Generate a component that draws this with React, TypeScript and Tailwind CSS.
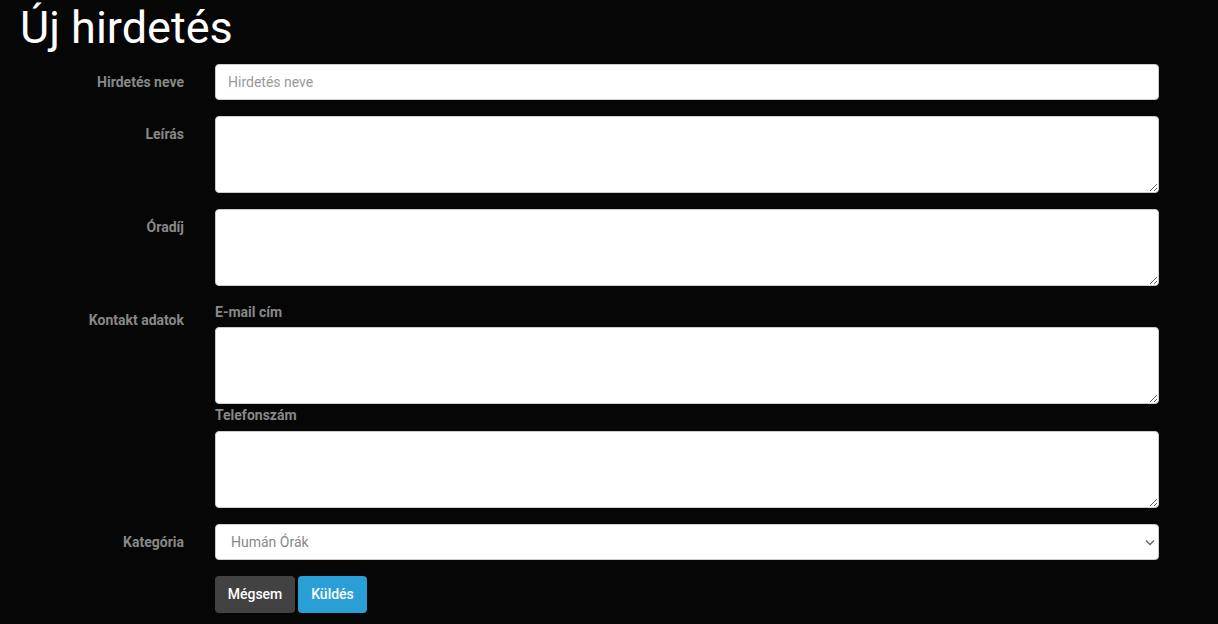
import React from "react";

const labelCls =
  "w-[184px] shrink-0 text-right text-[14px] font-bold text-[#888] pt-[8px] leading-[20px]";
const inputCls =
  "w-[944px] bg-white border border-[#ccc] rounded-[4px] text-[14px] text-[#555] outline-none";

export default function App() {
  return (
    <div
      className="min-h-[624px] bg-[#060606] text-[#888]"
      style={{ fontFamily: "Roboto, 'Noto Sans', sans-serif" }}
    >
      <h1 className="pl-[20px] pt-[3px] text-[45px] leading-[50px] font-normal text-white">
        Új hirdetés
      </h1>
      <form className="mt-[11px] flex flex-col gap-[16px]">
        <div className="flex">
          <label className={labelCls}>Hirdetés neve</label>
          <div className="ml-[31px]">
            <input
              className={`${inputCls} h-[36px] px-[12px] placeholder:text-[#999]`}
              placeholder="Hirdetés neve"
            />
          </div>
        </div>
        <div className="flex">
          <label className={labelCls}>Leírás</label>
          <div className="ml-[31px] flex">
            <textarea className={`${inputCls} h-[77px] px-[12px] py-[6px]`} />
          </div>
        </div>
        <div className="flex">
          <label className={labelCls}>Óradíj</label>
          <div className="ml-[31px] flex">
            <textarea className={`${inputCls} h-[77px] px-[12px] py-[6px]`} />
          </div>
        </div>
        <div className="flex">
          <label className={`${labelCls} pt-[7px]`}>Kontakt adatok</label>
          <div className="ml-[31px] flex flex-col">
            <span className="text-[14px] font-bold leading-[20px] text-[#888] mb-[5px]">
              E-mail cím
            </span>
            <textarea className={`${inputCls} h-[77px] px-[12px] py-[6px]`} />
            <span className="text-[14px] font-bold leading-[20px] text-[#888] mt-[1px] mb-[6px]">
              Telefonszám
            </span>
            <textarea className={`${inputCls} h-[77px] px-[12px] py-[6px]`} />
          </div>
        </div>
        <div className="flex">
          <label className={labelCls}>Kategória</label>
          <div className="ml-[31px] relative">
            <select
              className={`${inputCls} h-[36px] pl-[15px] pr-[30px] appearance-none text-[#888]`}
              defaultValue="human"
            >
              <option value="human">Humán Órák</option>
            </select>
            <svg
              className="absolute right-[4px] top-[15px] pointer-events-none"
              width="10"
              height="7"
              viewBox="0 0 10 7"
            >
              <path d="M1 1.5 L5 5.5 L9 1.5" stroke="#666" strokeWidth="1.5" fill="none" />
            </svg>
          </div>
        </div>
        <div className="flex">
          <div className="w-[184px] shrink-0" />
          <div className="ml-[31px] flex gap-[3px]">
            <button
              type="button"
              className="h-[37px] w-[80px] rounded-[4px] bg-[#424242] text-white text-[14px] font-medium"
            >
              Mégsem
            </button>
            <button
              type="button"
              className="h-[37px] w-[69px] rounded-[4px] bg-[#2a9fd6] text-white text-[14px] font-medium"
            >
              Küldés
            </button>
          </div>
        </div>
      </form>
    </div>
  );
}
